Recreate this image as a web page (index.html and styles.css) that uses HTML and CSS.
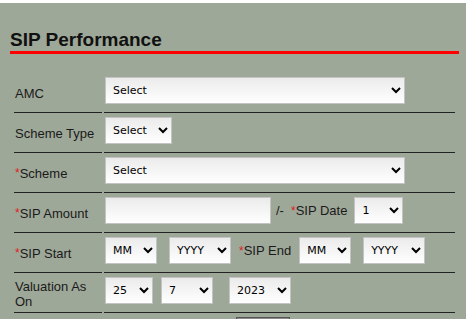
FILE: index.html
```html
<!DOCTYPE html>
<html>
<head>
<meta charset="utf-8">
<title>SIP Performance</title>
<link rel="stylesheet" href="styles.css">
</head>
<body>
<div class="panel">
  <h2 class="title">SIP Performance</h2>
  <div class="form">
    <div class="lbl">AMC</div>
    <div class="fld"><select class="sel w300"><option>Select</option></select></div>

    <div class="lbl">Scheme Type</div>
    <div class="fld"><select class="sel w67"><option>Select</option></select></div>

    <div class="lbl"><span class="req">*</span>Scheme</div>
    <div class="fld"><select class="sel w300"><option>Select</option></select></div>

    <div class="lbl"><span class="req">*</span>SIP Amount</div>
    <div class="fld">
      <input class="inp" type="text">
      <span class="txt slash">/-</span>
      <span class="txt sipdate"><span class="req">*</span>SIP Date</span>
      <select class="sel w49 gap7"><option>1</option></select>
    </div>

    <div class="lbl"><span class="req">*</span>SIP Start</div>
    <div class="fld">
      <select class="sel w52"><option>MM</option></select>
      <select class="sel w62 gap12"><option>YYYY</option></select>
      <span class="txt sipend"><span class="req">*</span>SIP End</span>
      <select class="sel w52 gap8"><option>MM</option></select>
      <select class="sel w62 gap12"><option>YYYY</option></select>
    </div>

    <div class="lbl">Valuation As On</div>
    <div class="fld">
      <select class="sel w48"><option>25</option></select>
      <select class="sel w52 gap8"><option>7</option></select>
      <select class="sel w62 gap16"><option>2023</option></select>
    </div>

    <div class="lbl"></div>
    <div class="fld"><button class="btn" type="button"></button></div>
  </div>
</div>
</body>
</html>
```

FILE: styles.css
```css
html, body {
  margin: 0;
  padding: 0;
  background: #ffffff;
}

body {
  font-family: "Liberation Sans", Arial, sans-serif;
  overflow: hidden;
}

.panel {
  margin-top: 3px;
  background: #9ea898;
  height: 400px;
  padding-top: 1px;
}

.title {
  margin: 25px 7px 0 10px;
  padding: 0;
  font: bold 19px/22px "Liberation Sans", Arial, sans-serif;
  color: #111;
  border-bottom: 3px solid #ff0000;
}

.form {
  display: grid;
  grid-template-columns: 88px 351px;
  column-gap: 2px;
  margin: 19px 0 0 14px;
}

.lbl {
  display: flex;
  align-items: center;
  padding: 2px 0 0 1px;
  box-sizing: border-box;
  height: 40px;
  border-bottom: 1px solid #222;
  font-size: 13px;
  line-height: 15px;
  color: #1a1a1a;
}

.fld {
  display: flex;
  align-items: flex-start;
  padding: 4px 0 0 1px;
  box-sizing: border-box;
  height: 40px;
  border-bottom: 1px solid #222;
}

.req {
  color: #e0201c;
  font-size: 12px;
}

.txt {
  font-size: 13px;
  line-height: 27px;
  color: #1a1a1a;
}

.slash {
  margin-left: 5px;
}

.sipdate {
  margin-left: 7px;
}

.sipend {
  margin-left: 8px;
}

.sel,
.inp {
  box-sizing: border-box;
  height: 27px;
  margin: 0;
  border: 1px solid #c4c4c4;
  border-radius: 0;
  background: linear-gradient(#ebebeb, #ffffff);
  font: 11px "DejaVu Sans", Verdana, sans-serif;
  color: #000;
  padding: 0 0 0 3px;
}

.inp {
  width: 166px;
  padding: 0 4px;
}

.w300 { width: 300px; }
.w67 { width: 67px; }
.w49 { width: 49px; }
.w52 { width: 52px; }
.w62 { width: 62px; }
.w48 { width: 48px; }

.gap7 { margin-left: 7px; }
.gap8 { margin-left: 8px; }
.gap12 { margin-left: 12px; }
.gap16 { margin-left: 16px; }

.btn {
  margin-left: 131px;
  height: 27px;
  width: 54px;
  border: 1px solid #555;
  background: linear-gradient(#8a8a8a, #666);
}
```
